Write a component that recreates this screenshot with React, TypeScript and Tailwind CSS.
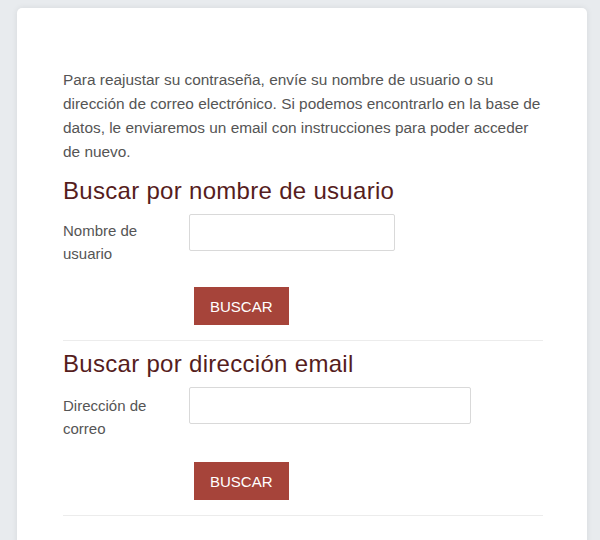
import React from "react";

const FONT = { fontFamily: '"Liberation Sans", Arial, sans-serif' };

function SearchBlock({ title, label, inputWidth, labelPad }: { title: string; label: [string, string]; inputWidth: string; labelPad: string }) {
  return (
    <div>
      <h3 className="text-[24px] leading-[29px] tracking-[0.3px] text-[#561d1d] mb-[9px]">{title}</h3>
      <div className="flex mb-[22px]">
        <label className={`w-[126px] shrink-0 text-[15px] leading-[23px] text-[#555] ${labelPad}`}>
          {label[0]}
          <br />
          {label[1]}
        </label>
        <input type="text" className={`${inputWidth} h-[37px] border border-[#d9d9d9] rounded-[2px] bg-white outline-none`} />
      </div>
      <div className="pl-[131px]">
        <button className="h-[38px] px-[16px] bg-[#a6443a] text-white text-[15px] leading-none">BUSCAR</button>
      </div>
      <hr className="mt-[15px] border-0 border-t border-[#ececec]" />
    </div>
  );
}

export default function App() {
  return (
    <div className="w-[600px] h-[540px] overflow-hidden bg-[#e8ebee] pt-[8px] pl-[17px]" style={FONT}>
      <div className="w-[570px] h-[600px] bg-white rounded-[5px] shadow-[0_0_6px_rgba(0,0,0,0.08)] pt-[60px] pl-[46px] pr-[40px]">
        <p className="max-w-[482px] text-[15.4px] leading-[24px] text-[#555] mb-[12px]">
          Para reajustar su contraseña, envíe su nombre de usuario o su dirección de correo electrónico. Si podemos encontrarlo en la base de datos, le enviaremos un email con instrucciones para poder acceder de nuevo.
        </p>
        <div className="w-[480px]">
          <SearchBlock title="Buscar por nombre de usuario" label={["Nombre de", "usuario"]} inputWidth="w-[206px]" labelPad="pt-[5px]" />
          <div className="mt-[8px]">
            <SearchBlock title="Buscar por dirección email" label={["Dirección de", "correo"]} inputWidth="w-[282px]" labelPad="pt-[7px]" />
          </div>
        </div>
      </div>
    </div>
  );
}
